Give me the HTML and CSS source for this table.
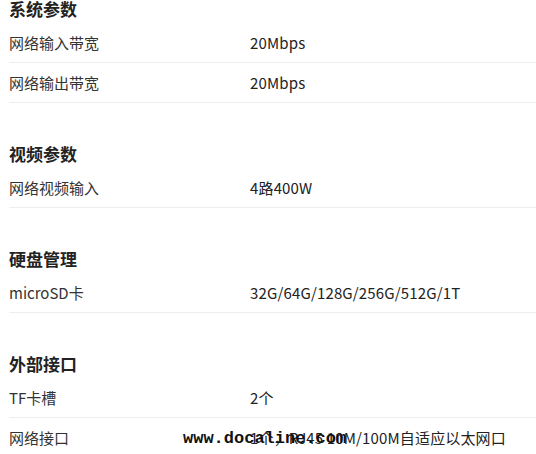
FILE: index.html
```html
<!DOCTYPE html>
<html>
<head>
    <title>产品参数</title>
    <meta charset="utf-8">
    <meta name="viewport" content="width=device-width, initial-scale=1">
    <link rel="stylesheet" href="styles.css">
</head>
<body>
    <div class="spec-list">
        <div class="spec-group">
            <h3>系统参数</h3>
            <div class="spec-row"><span class="spec-name">网络输入带宽</span><span class="spec-value">20Mbps</span></div>
            <div class="spec-row"><span class="spec-name">网络输出带宽</span><span class="spec-value">20Mbps</span></div>
        </div>

        <div class="spec-group">
            <h3>视频参数</h3>
            <div class="spec-row"><span class="spec-name">网络视频输入</span><span class="spec-value">4路400W</span></div>
        </div>

        <div class="spec-group">
            <h3>硬盘管理</h3>
            <div class="spec-row"><span class="spec-name">microSD卡</span><span class="spec-value">32G/64G/128G/256G/512G/1T</span></div>
        </div>

        <div class="spec-group">
            <h3>外部接口</h3>
            <div class="spec-row"><span class="spec-name">TF卡槽</span><span class="spec-value">2个</span></div>
            <div class="spec-row"><span class="spec-name">网络接口</span><span class="spec-value">1个，RJ45 10M/100M自适应以太网口</span></div>
        </div>
    </div>

    <div class="watermark">www.docaline.com</div>
</body>
</html>
```

FILE: styles.css
```css
body {
    margin: 0;
    font-family: "Noto Sans CJK SC", "Noto Sans", sans-serif;
    color: #333;
    background-color: #fff;
    overflow: hidden;
}
.spec-list {
    padding-left: 9px;
    margin-top: -1px;
}
.spec-group {
    margin-bottom: 41px;
}
.spec-group h3 {
    margin: 0;
    padding-bottom: 4px;
    font-size: 17px;
    line-height: 20px;
    font-weight: bold;
    color: #222;
}
.spec-row {
    display: grid;
    grid-template-columns: 241px 1fr;
    height: 40px;
    align-items: center;
    border-bottom: 1px solid #eee;
    font-size: 15px;
    box-sizing: border-box;
}
.spec-name {
    color: #333;
}
.spec-value {
    color: #222;
    letter-spacing: 0.15px;
}
.watermark {
    position: absolute;
    left: 183px;
    top: 428px;
    font-family: "Liberation Mono", monospace;
    font-weight: bold;
    font-size: 17px;
    line-height: 22px;
    color: #111;
}
```
